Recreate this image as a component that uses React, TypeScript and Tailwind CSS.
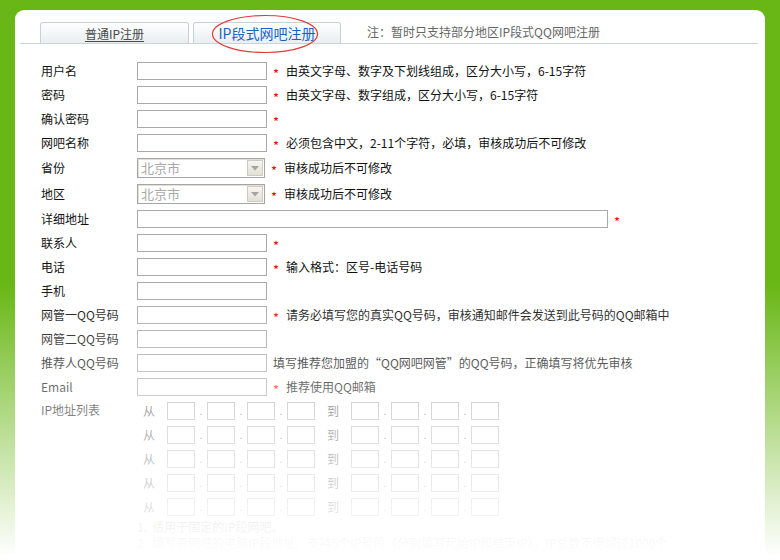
import React from "react";

type Row = {
  label: string;
  kind: "input" | "wide" | "select";
  star?: boolean;
  note?: string;
  h?: string;
};

const rows: Row[] = [
  { label: "用户名", kind: "input", star: true, note: "由英文字母、数字及下划线组成，区分大小写，6-15字符" },
  { label: "密码", kind: "input", star: true, note: "由英文字母、数字组成，区分大小写，6-15字符" },
  { label: "确认密码", kind: "input", star: true },
  { label: "网吧名称", kind: "input", star: true, note: "必须包含中文，2-11个字符，必填，审核成功后不可修改" },
  { label: "省份", kind: "select", star: true, note: "审核成功后不可修改" },
  { label: "地区", kind: "select", star: true, note: "审核成功后不可修改" },
  { label: "详细地址", kind: "wide", star: true },
  { label: "联系人", kind: "input", star: true },
  { label: "电话", kind: "input", star: true, note: "输入格式：区号-电话号码" },
  { label: "手机", kind: "input" },
  { label: "网管一QQ号码", kind: "input", star: true, note: "请务必填写您的真实QQ号码，审核通知邮件会发送到此号码的QQ邮箱中" },
  { label: "网管二QQ号码", kind: "input" },
  { label: "推荐人QQ号码", kind: "input", note: "填写推荐您加盟的“QQ网吧网管”的QQ号码，正确填写将优先审核" },
  { label: "Email", kind: "input", star: true, note: "推荐使用QQ邮箱" },
];

const Star = () => (
  <span className="ml-[6px] w-[7px] translate-y-[3px] text-[13px] leading-[16px] text-[#ff0000]">*</span>
);

const Select = () => (
  <div className="flex h-[20px] w-[128px] border border-[#a5a5a5] bg-white shadow-[inset_1px_1px_0_#e3e0d3]">
    <span className="flex-1 pl-[3px] text-[13px] leading-[18px] text-[#a8a8a8]">北京市</span>
    <span className="m-[1px] flex w-[16px] items-center justify-center border border-[#cfcdc2] bg-linear-to-b from-[#f6f5f0] to-[#e2e0d6]">
      <svg width="8" height="5" viewBox="0 0 8 5">
        <path d="M0 0h8L4 4.5z" fill="#a3a3a3" />
      </svg>
    </span>
  </div>
);

const FormRow = ({ row }: { row: Row }) => (
  <div className={`flex items-center ${row.kind === "select" ? "h-[26px]" : "h-[24px]"}`}>
    <div className="w-[96px] text-[12px] leading-[16px] text-[#111]">{row.label}</div>
    {row.kind === "select" ? (
      <Select />
    ) : (
      <input
        readOnly
        className={`h-[18px] border border-[#a9a9a9] bg-white ${row.kind === "wide" ? "w-[471px]" : "w-[130px]"}`}
      />
    )}
    {row.star && <Star />}
    {row.note && (
      <span className="ml-[6px] text-[12px] leading-[16px] text-[#111] whitespace-nowrap">{row.note}</span>
    )}
  </div>
);

const IpBox = () => <input readOnly className="h-[18px] w-[28px] border border-[#b4b4b4] bg-white" />;
const Dot = () => <span className="w-[12px] text-center text-[10px] leading-[18px] text-[#777]">.</span>;

const IpRow = () => (
  <div className="flex h-[24px] items-center pl-[6px]">
    <span className="mr-[12px] w-[12px] text-[12px] text-[#555]">从</span>
    <IpBox />
    <Dot />
    <IpBox />
    <Dot />
    <IpBox />
    <Dot />
    <IpBox />
    <span className="mx-[12px] w-[12px] text-[12px] text-[#555]">到</span>
    <IpBox />
    <Dot />
    <IpBox />
    <Dot />
    <IpBox />
    <Dot />
    <IpBox />
  </div>
);

export default function App() {
  return (
    <div className="relative h-[560px] w-[780px] overflow-hidden bg-[#69b716] px-[15px] pt-[10px] font-[family-name:'Noto_Sans_CJK_SC',sans-serif]">
      <div className="h-full rounded-t-[9px] bg-white">
        {/* tabs */}
        <div className="ml-[5px] mr-[7px] flex items-end border-b border-[#c9d5dc] pl-[20px] pt-[12px]">
          <div className="flex h-[21px] w-[149px] justify-center rounded-t-[3px] border border-b-0 border-[#c3d1d9] bg-linear-to-b from-[#ffffff] to-[#e8eef1] pt-[2px]">
            <span className="text-[12px] leading-[18px] text-[#4a4a4a] underline underline-offset-2">普通IP注册</span>
          </div>
          <div className="ml-[4px] flex h-[21px] w-[148px] justify-center rounded-t-[3px] border border-b-0 border-[#c3d1d9] bg-linear-to-b from-[#ffffff] to-[#e8eef1] pt-[1px]">
            <span className="text-[14px] leading-[19px] text-[#1563c4]">IP段式网吧注册</span>
          </div>
          <div className="ml-[26px] pb-[2px] text-[12px] leading-[18px] text-[#666]">注：暂时只支持部分地区IP段式QQ网吧注册</div>
        </div>

        {/* form */}
        <div className="pl-[26px] pt-[15px]">
          {rows.map((r) => (
            <FormRow key={r.label} row={r} />
          ))}
          <div className="flex">
            <div className="w-[96px] pt-[3px] text-[12px] leading-[16px] text-[#111]">IP地址列表</div>
            <div>
              <IpRow />
              <IpRow />
              <IpRow />
              <IpRow />
              <IpRow />
            </div>
          </div>
          <div className="pl-[96px] text-[12px] leading-[16px] text-[#888] whitespace-nowrap">
            <div>1.&nbsp;&nbsp;适用于固定的IP段网吧。</div>
            <div>2.&nbsp;&nbsp;填写贵网吧的电脑IP段地址，支持5个IP号段（分别填写起始IP和结束IP），IP总数不得超过1000个</div>
          </div>
        </div>
      </div>

      {/* red highlight ring round the active tab */}
      <svg className="pointer-events-none absolute left-[211px] top-[14px]" width="108" height="40" viewBox="0 0 108 40">
        <ellipse cx="54" cy="20" rx="52.5" ry="18.5" fill="none" stroke="#e23a3a" strokeWidth="1.2" />
      </svg>

      {/* bottom fade */}
      <div className="pointer-events-none absolute inset-0 bg-[linear-gradient(to_bottom,rgba(255,255,255,0)_285px,#ffffff_556px)]" />
    </div>
  );
}
